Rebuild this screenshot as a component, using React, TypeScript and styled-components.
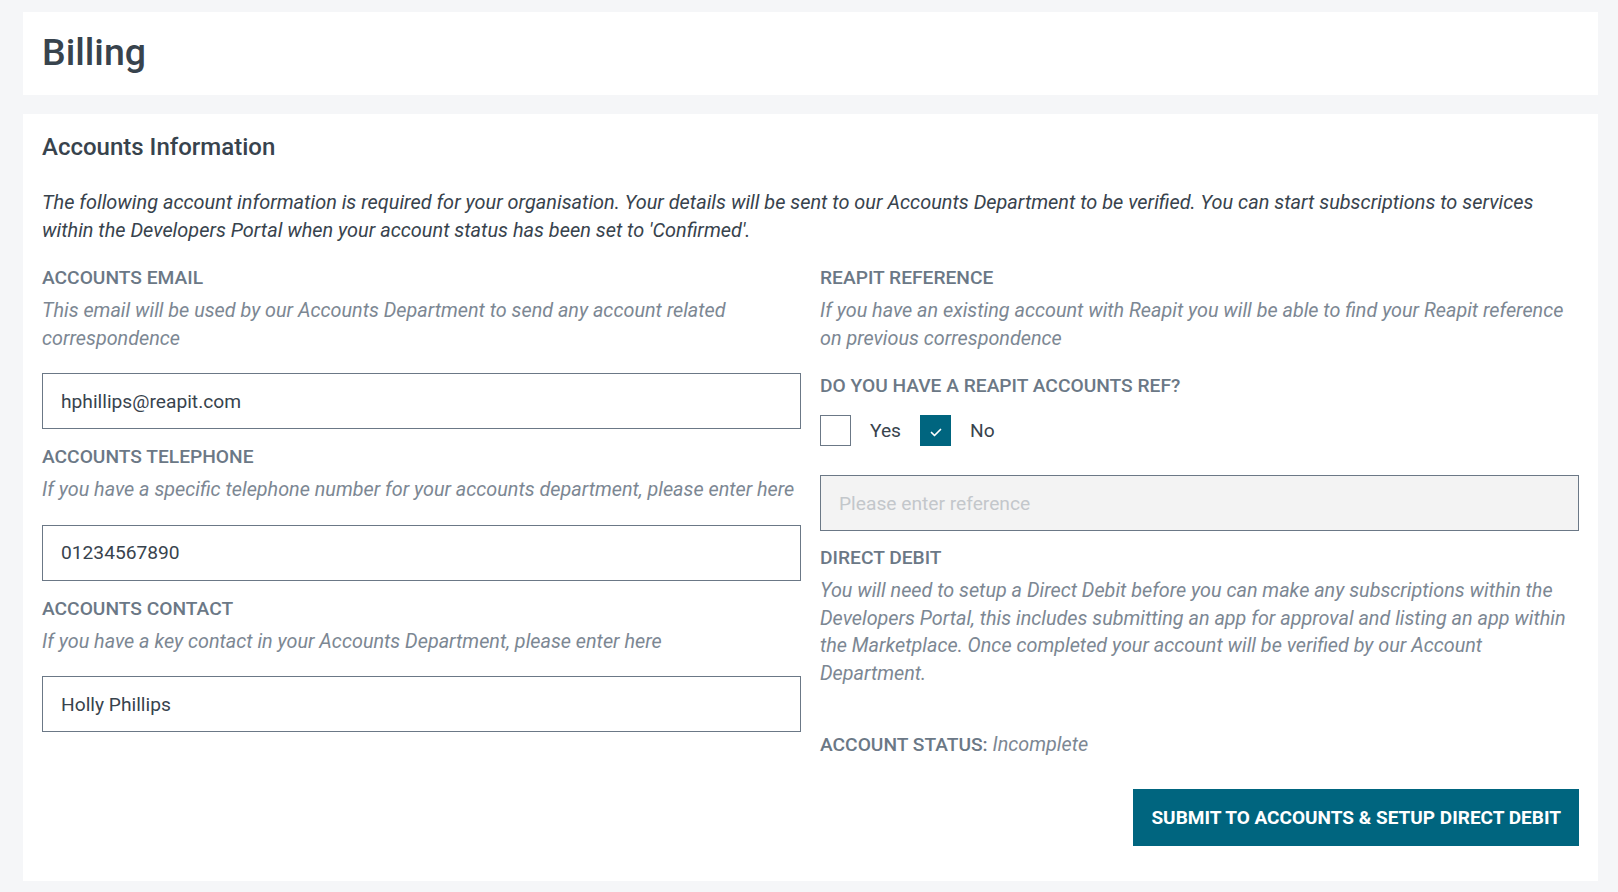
import React from "react";
import styled, { createGlobalStyle } from "styled-components";

const colors = {
  page: "#f5f6f8",
  white: "#ffffff",
  heading: "#38434d",
  label: "#6b7886",
  muted: "#7c8793",
  border: "#6b7886",
  disabled: "#f3f3f3",
  placeholder: "#c3c7cb",
  brand: "#00657f",
};

const GlobalStyle = createGlobalStyle`
  * {
    box-sizing: border-box;
  }

  body {
    margin: 0;
    background: ${colors.page};
    font-family: Roboto, "Liberation Sans", Arial, sans-serif;
    color: ${colors.heading};
  }
`;

const Page = styled.main`
  display: flex;
  flex-direction: column;
  gap: 19px;
  padding: 12px 20px 11px 23px;
  min-height: 892px;
`;

const HeaderCard = styled.header`
  background: ${colors.white};
  height: 83px;
  padding: 0 19px;
  display: flex;
  align-items: center;
`;

const Title = styled.h1`
  margin: 0;
  font-size: 37.5px;
  font-weight: 500;
  color: ${colors.heading};
  line-height: 1;
  padding-bottom: 2px;
`;

const Card = styled.section`
  background: ${colors.white};
  padding: 18px 19px 35px 19px;
`;

const SectionTitle = styled.h2`
  margin: 0 0 27px;
  font-size: 24px;
  font-weight: 500;
  line-height: 30px;
  color: ${colors.heading};
`;

const Intro = styled.p`
  margin: 0 0 19px;
  font-size: 19.9px;
  font-style: italic;
  line-height: 28px;
  color: ${colors.heading};
`;

const Columns = styled.div`
  display: grid;
  grid-template-columns: 1fr 1fr;
  column-gap: 19px;
  align-items: start;
`;

const Column = styled.div`
  display: flex;
  flex-direction: column;
`;

const Field = styled.div<{ $gap?: number }>`
  display: flex;
  flex-direction: column;
  margin-bottom: ${(p) => p.$gap ?? 14}px;
`;

const Label = styled.label`
  font-size: 19.2px;
  font-weight: 500;
  line-height: 28px;
  text-transform: uppercase;
  color: ${colors.label};
`;

const Hint = styled.p<{ $after?: number }>`
  margin: 5px 0 ${(p) => p.$after ?? 21}px;
  font-size: 19.8px;
  font-style: italic;
  line-height: 27.6px;
  color: ${colors.muted};
`;

const Input = styled.input`
  height: 56px;
  width: 100%;
  border: 1px solid ${colors.border};
  border-radius: 0;
  padding: 0 18px;
  font-family: inherit;
  font-size: 19.2px;
  color: ${colors.heading};
  background: ${colors.white};
  outline: none;

  &:disabled {
    background: ${colors.disabled};
  }

  &::placeholder {
    color: ${colors.placeholder};
  }
`;

const CheckRow = styled.div`
  display: flex;
  align-items: center;
  margin: 15px 0 29px;
`;

const CheckOption = styled.label`
  display: flex;
  align-items: center;
  gap: 19px;
  margin-right: 19px;
  font-size: 19.2px;
  color: ${colors.heading};
`;

const Box = styled.span<{ $checked?: boolean }>`
  width: 31px;
  height: 31px;
  display: flex;
  align-items: center;
  justify-content: center;
  border: 1px solid ${(p) => (p.$checked ? colors.brand : colors.border)};
  background: ${(p) => (p.$checked ? colors.brand : colors.white)};
`;

const Status = styled.div`
  margin-top: 43px;
  font-size: 19.2px;
  line-height: 28px;
  font-weight: 500;
  color: ${colors.label};

  span {
    text-transform: uppercase;
  }

  em {
    font-weight: 400;
    font-size: 19.8px;
    color: ${colors.muted};
  }
`;

const Actions = styled.div`
  display: flex;
  justify-content: flex-end;
  margin-top: 30px;
`;

const Button = styled.button`
  height: 57px;
  padding: 0 18px;
  border: 0;
  border-radius: 0;
  background: ${colors.brand};
  color: ${colors.white};
  font-family: inherit;
  font-size: 19px;
  font-weight: 700;
  text-transform: uppercase;
  cursor: pointer;
`;

function Check() {
  return (
    <svg width="14" height="12" viewBox="0 0 14 12" fill="none" style={{ marginTop: 3 }}>
      <path d="M2.5 6.5l3 3L11.5 3.5" stroke="#fff" strokeWidth="1.7" strokeLinecap="round" strokeLinejoin="round" />
    </svg>
  );
}

export default function App() {
  return (
    <>
      <GlobalStyle />
      <Page>
        <HeaderCard>
          <Title>Billing</Title>
        </HeaderCard>
        <Card>
          <SectionTitle>Accounts Information</SectionTitle>
          <Intro>
            The following account information is required for your organisation. Your details will be sent to our
            Accounts Department to be verified. You can start subscriptions to services within the Developers Portal
            when your account status has been set to 'Confirmed'.
          </Intro>
          <Columns>
            <Column>
              <Field>
                <Label>Accounts Email</Label>
                <Hint>This email will be used by our Accounts Department to send any account related correspondence</Hint>
                <Input defaultValue="hphillips@reapit.com" />
              </Field>
              <Field>
                <Label>Accounts Telephone</Label>
                <Hint>If you have a specific telephone number for your accounts department, please enter here</Hint>
                <Input defaultValue="01234567890" />
              </Field>
              <Field>
                <Label>Accounts Contact</Label>
                <Hint>If you have a key contact in your Accounts Department, please enter here</Hint>
                <Input defaultValue="Holly Phillips" />
              </Field>
            </Column>
            <Column>
              <Field $gap={0}>
                <Label>Reapit Reference</Label>
                <Hint $after={20}>
                  If you have an existing account with Reapit you will be able to find your Reapit reference on previous
                  correspondence
                </Hint>
              </Field>
              <Field $gap={13}>
                <Label>Do you have a Reapit Accounts Ref?</Label>
                <CheckRow>
                  <CheckOption>
                    <Box />
                    Yes
                  </CheckOption>
                  <CheckOption>
                    <Box $checked>
                      <Check />
                    </Box>
                    No
                  </CheckOption>
                </CheckRow>
                <Input placeholder="Please enter reference" disabled />
              </Field>
              <Field $gap={0}>
                <Label>Direct Debit</Label>
                <Hint $after={0}>
                  You will need to setup a Direct Debit before you can make any subscriptions within the Developers
                  Portal, this includes submitting an app for approval and listing an app within the Marketplace. Once
                  completed your account will be verified by our Account Department.
                </Hint>
              </Field>
              <Status>
                <span>Account Status:</span> <em>Incomplete</em>
              </Status>
            </Column>
          </Columns>
          <Actions>
            <Button>Submit to Accounts &amp; Setup Direct Debit</Button>
          </Actions>
        </Card>
      </Page>
    </>
  );
}
